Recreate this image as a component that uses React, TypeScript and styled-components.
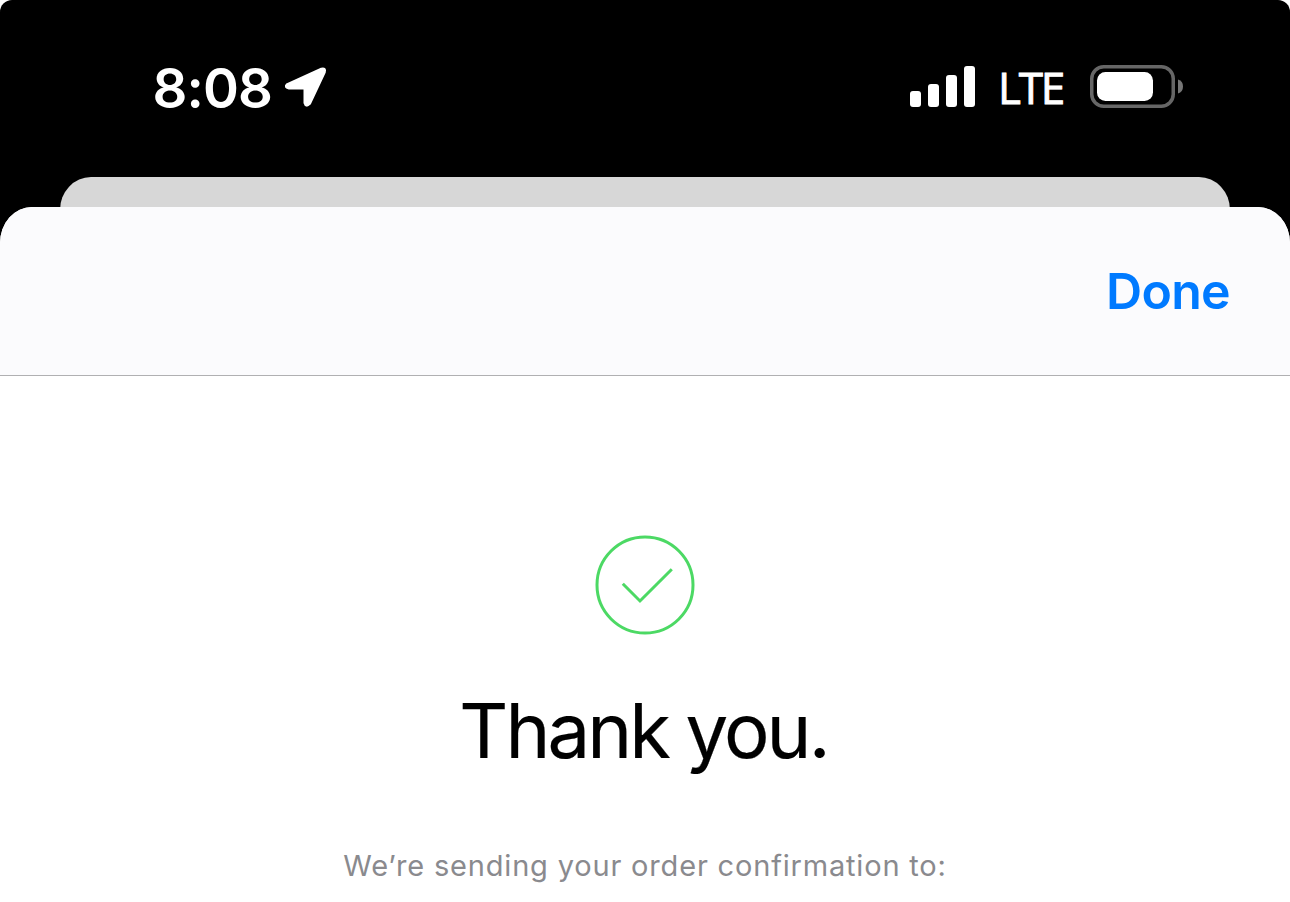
import React from "react";
import styled, { createGlobalStyle } from "styled-components";

const GlobalStyle = createGlobalStyle`
  body {
    margin: 0;
    background: #ffffff;
    font-family: Inter, "Liberation Sans", sans-serif;
  }
`;

const Screen = styled.div`
  display: flex;
  flex-direction: column;
  width: 1290px;
  height: 902px;
  overflow: hidden;
  border-radius: 12px 12px 0 0;
  background: black;
`;

const StatusBar = styled.div`
  display: flex;
  align-items: flex-start;
  justify-content: space-between;
  box-sizing: border-box;
  flex: none;
  height: 177px;
  padding: 59px 106px 0 152.500px;
  color: white;
`;

const StatusGroup = styled.div`
  display: flex;
  align-items: center;
  height: 56px;
`;

const Time = styled.span`
  font-size: 54.500px;
  font-weight: 600;
  line-height: 56px;
  letter-spacing: -0.9px;
  padding-top: 2px;
  margin-right: 11.500px;
`;

const Network = styled.span`
  font-family: "Open Sans", "Noto Sans", sans-serif;
  font-size: 44px;
  font-weight: 500;
  line-height: 56px;
  letter-spacing: -2.2px;
  margin: 0 27px 0 22px;
  -webkit-text-stroke: 0.9px white;
`;

const BackSheet = styled.div`
  flex: none;
  height: 60px;
  margin: 0 60px -30px;
  border-radius: 31px 31px 0 0 / 33px 33px 0 0;
  background: #d7d7d7;
`;

const Sheet = styled.div`
  display: flex;
  flex-direction: column;
  flex: 1;
  overflow: hidden;
  border-radius: 32px 32px 0 0 / 36px 36px 0 0;
  background: white;
`;

const NavBar = styled.div`
  display: flex;
  align-items: center;
  justify-content: flex-end;
  box-sizing: border-box;
  height: 169px;
  padding: 0 60px 0 0;
  border-bottom: 1px solid #b0b0b2;
  background: #fbfbfd;
`;

const DoneButton = styled.button`
  border: none;
  padding: 0;
  background: none;
  color: #007aff;
  font-family: inherit;
  font-size: 50px;
  font-weight: 600;
  line-height: 60px;
  letter-spacing: -0.7px;
  cursor: pointer;
`;

const Content = styled.div`
  display: flex;
  flex-direction: column;
  align-items: center;
  padding-top: 159px;
`;

const Title = styled.h1`
  margin: 49px 0 0;
  padding-right: 3px;
  color: black;
  font-size: 76px;
  font-weight: 400;
  line-height: 92px;
  letter-spacing: -2.9px;
  word-spacing: -1px;
  white-space: nowrap;
  -webkit-text-stroke: 0.2px black;
`;

const Description = styled.p`
  margin: 71px 0 0;
  color: #8a8a8e;
  font-size: 29px;
  font-weight: 400;
  line-height: 38px;
  letter-spacing: 0.82px;
  white-space: nowrap;
`;

const LocationIcon = () => (
  <svg width="44" height="44" viewBox="0 0 44 44">
    <path
      d="M3.500 19.500 37.500 4.200Q41.500 3.200 40.300 7L25.500 38.500Q22 42 21 38V23H5Q0.500 22 3.500 19.500Z"
      fill="white"
      stroke="white"
      strokeWidth="3"
      strokeLinejoin="round"
    />
  </svg>
);

const SignalIcon = () => (
  <svg width="66" height="42" viewBox="0 0 66 42">
    <g fill="white">
      <rect x="0" y="25" width="11" height="16" rx="3" />
      <rect x="18" y="18" width="11" height="23" rx="3" />
      <rect x="36" y="9" width="11" height="32" rx="3" />
      <rect x="54" y="0" width="11" height="41" rx="3" />
    </g>
  </svg>
);

const BatteryIcon = () => (
  <svg width="94" height="44" viewBox="0 0 94 44">
    <rect
      x="1.75"
      y="1.75"
      width="81.500"
      height="39.500"
      rx="12"
      fill="none"
      stroke="#666666"
      strokeWidth="3.500"
    />
    <rect x="7" y="7" width="56" height="29" rx="8.500" fill="white" />
    <path d="M88 14.500Q93 16 93 21.500T88 28.500Z" fill="#777777" />
  </svg>
);

const CheckIcon = () => (
  <svg width="100" height="100" viewBox="0 0 100 100">
    <g fill="none" stroke="#4cd964" strokeWidth="3">
      <circle cx="50" cy="50" r="48" />
      <path d="M27.800 48.800 45 66 76.800 34.300" />
    </g>
  </svg>
);

const App = () => {
  return (
    <React.Fragment>
      <GlobalStyle />
      <Screen>
        <StatusBar>
          <StatusGroup>
            <Time>8:08</Time>
            <LocationIcon />
          </StatusGroup>
          <StatusGroup>
            <SignalIcon />
            <Network>LTE</Network>
            <BatteryIcon />
          </StatusGroup>
        </StatusBar>
        <BackSheet />
        <Sheet>
          <NavBar>
            <DoneButton>Done</DoneButton>
          </NavBar>
          <Content>
            <CheckIcon />
            <Title>Thank you.</Title>
            <Description>We’re sending your order confirmation to:</Description>
          </Content>
        </Sheet>
      </Screen>
    </React.Fragment>
  );
};

export default App;
